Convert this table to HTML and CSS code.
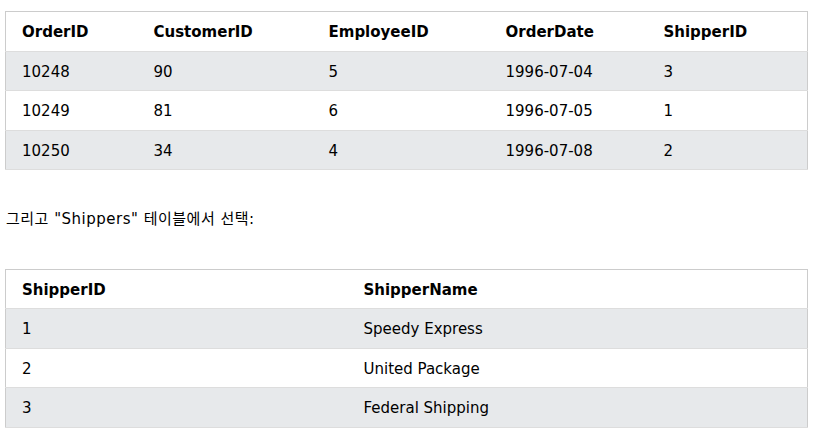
FILE: index.html
```html
<!DOCTYPE html>
<html lang="ko">
<head>
<meta charset="utf-8">
<link rel="stylesheet" href="styles.css">
</head>
<body>
<div class="page">
  <table class="data orders">
    <colgroup>
      <col class="c1"><col class="c2"><col class="c3"><col class="c4"><col class="c5">
    </colgroup>
    <tr><th>OrderID</th><th>CustomerID</th><th>EmployeeID</th><th>OrderDate</th><th>ShipperID</th></tr>
    <tr><td>10248</td><td>90</td><td>5</td><td>1996-07-04</td><td>3</td></tr>
    <tr><td>10249</td><td>81</td><td>6</td><td>1996-07-05</td><td>1</td></tr>
    <tr><td>10250</td><td>34</td><td>4</td><td>1996-07-08</td><td>2</td></tr>
  </table>
  <p class="note">그리고 "Shippers" 테이블에서 선택:</p>
  <table class="data shippers">
    <colgroup>
      <col class="s1"><col class="s2">
    </colgroup>
    <tr><th>ShipperID</th><th>ShipperName</th></tr>
    <tr><td>1</td><td>Speedy Express</td></tr>
    <tr><td>2</td><td>United Package</td></tr>
    <tr><td>3</td><td>Federal Shipping</td></tr>
  </table>
</div>
</body>
</html>
```

FILE: styles.css
```css
html, body {
  margin: 0;
  padding: 0;
  background: #fff;
}
.page {
  padding: 11px 0 0 5px;
  width: 802px;
  font-family: Verdana, "DejaVu Sans", "Noto Sans CJK KR", sans-serif;
  font-size: 15px;
  line-height: 1.5;
  color: #000;
}
.data {
  border-collapse: collapse;
  border: 1px solid #ccc;
  width: 802px;
  table-layout: fixed;
}
.data tr {
  border-bottom: 1px solid #ddd;
}
.data tr:nth-child(even) {
  background: #e7e9eb;
}
.data th, .data td {
  text-align: left;
  vertical-align: top;
  padding: 9px 8px 7px;
  font-size: 15px;
  line-height: 22.5px;
  white-space: nowrap;
}
.data th {
  font-weight: bold;
}
.data th:first-child, .data td:first-child {
  padding-left: 16px;
}
.c1 { width: 140px; }
.c2 { width: 175px; }
.c3 { width: 177px; }
.c4 { width: 158px; }
.c5 { width: 152px; }
.s1 { width: 350px; }
.s2 { width: 452px; }
.note {
  margin: 38px 0 38px 1px;
  font-family: Verdana, "DejaVu Sans", "Noto Sans CJK KR", sans-serif;
  font-size: 15px;
  line-height: 22.5px;
  letter-spacing: 0.5px;
}
```
